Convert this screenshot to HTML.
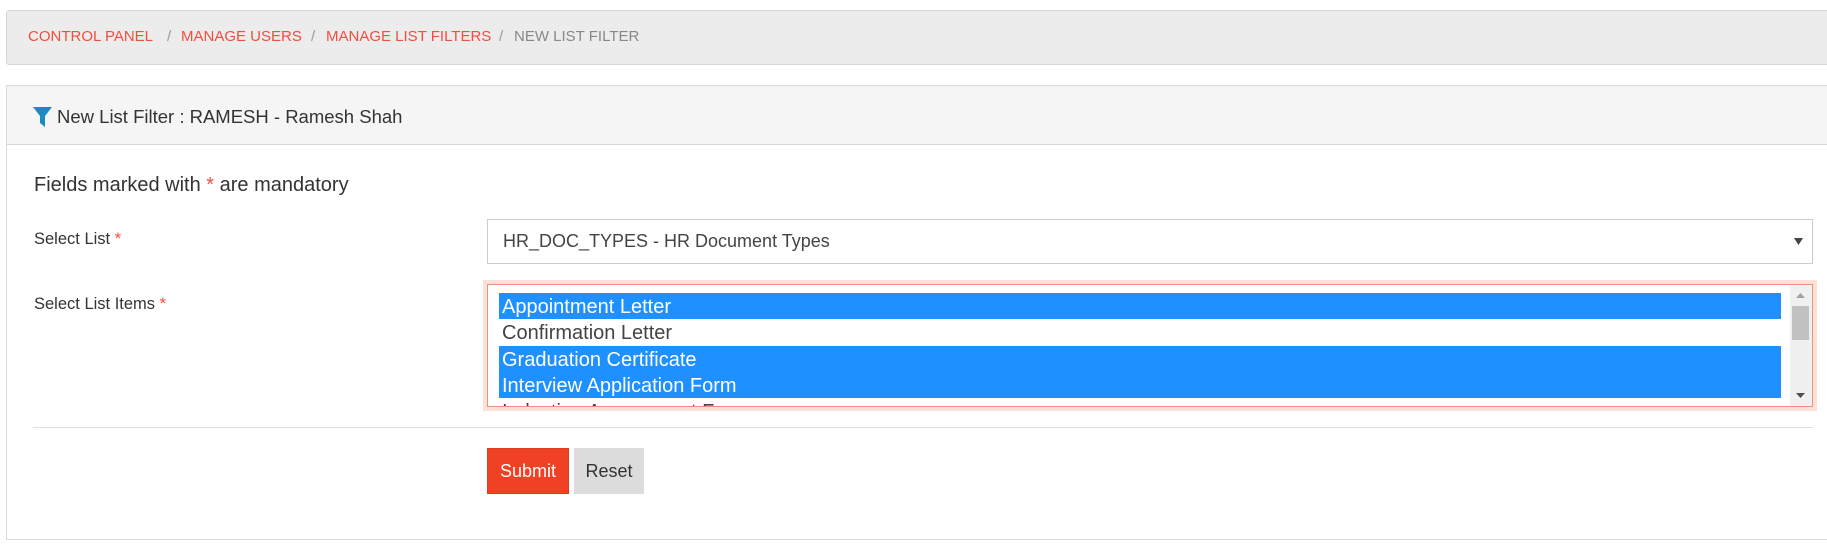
<!DOCTYPE html>
<html><head><style>
*{box-sizing:border-box;margin:0;padding:0}
body{width:1827px;height:545px;background:#fff;font-family:"Liberation Sans",sans-serif;position:relative;overflow:hidden;color:#333}
.abs{position:absolute}
.bc{left:6px;top:10px;width:1821px;height:55px;background:#ececec;border:1px solid #d6d6d6;border-right:none;border-radius:3px 0 0 3px}
.bc span{position:absolute;top:17px;font-size:15px;white-space:nowrap}
.red{color:#f04e3e}
.panel{left:6px;top:85px;width:1821px;height:455px;border:1px solid #dcdcdc;border-right:none}
.ph{left:7px;top:86px;width:1820px;height:59px;background:#f5f5f5;border-bottom:1px solid #d8d8d8}
.t{white-space:nowrap}
</style></head><body>
<div class="abs bc">
<span class="red" style="left:21px">CONTROL PANEL</span>
<span style="left:160px;color:#999">/</span>
<span class="red" style="left:174px">MANAGE USERS</span>
<span style="left:304px;color:#999">/</span>
<span class="red" style="left:319px">MANAGE LIST FILTERS</span>
<span style="left:492px;color:#999">/</span>
<span style="left:507px;color:#888">NEW LIST FILTER</span>
</div>
<div class="abs panel"></div>
<div class="abs ph"></div>
<svg class="abs" style="left:33px;top:107px" width="19" height="20" viewBox="0 0 19 20"><path d="M0 0H19L12 9V20L7 16V9Z" fill="#1a8ac3"/></svg>
<div class="abs t" style="left:57px;top:106px;font-size:18.5px;color:#333">New List Filter : RAMESH - Ramesh Shah</div>
<div class="abs t" style="left:34px;top:174px;font-size:20px">Fields marked with <span class="red">*</span> are mandatory</div>
<div class="abs t" style="left:34px;top:230px;font-size:16.5px">Select List <span class="red">*</span></div>
<div class="abs t" style="left:34px;top:295px;font-size:16.5px">Select List Items <span class="red">*</span></div>
<div class="abs" style="left:487px;top:219px;width:1326px;height:45px;border:1px solid #ccc;background:#fff"></div>
<div class="abs t" style="left:503px;top:231px;font-size:18px;color:#444">HR_DOC_TYPES - HR Document Types</div>
<svg class="abs" style="left:1794px;top:238px" width="9" height="7"><path d="M0 0H9L4.5 7Z" fill="#444"/></svg>
<div class="abs" style="left:483px;top:280px;width:1334px;height:131px;background:#fae2d8"></div>
<div class="abs" style="left:487px;top:284px;width:1326px;height:123px;border:1px solid #f2917a;background:#fff;overflow:hidden">
 <div class="abs" style="left:11px;top:8px;width:1282px;height:26px;background:#1e90ff"></div>
 <div class="abs" style="left:11px;top:61px;width:1282px;height:52px;background:#1e90ff"></div>
 <div class="abs t" style="left:14px;top:11px;font-size:20px;color:#fff">Appointment Letter</div>
 <div class="abs t" style="left:14px;top:37px;font-size:20px;color:#444">Confirmation Letter</div>
 <div class="abs t" style="left:14px;top:64px;font-size:20px;color:#fff">Graduation Certificate</div>
 <div class="abs t" style="left:14px;top:90px;font-size:20px;color:#fff">Interview Application Form</div>
 <div class="abs t" style="left:14px;top:116px;font-size:20px;color:#444">Induction Assessment Form</div>
 <div class="abs" style="left:1302px;top:0;width:22px;height:121px;background:#f0f0f0"></div>
 <div class="abs" style="left:1304px;top:21px;width:17px;height:34px;background:#c1c1c1"></div>
 <svg class="abs" style="left:1308px;top:8px" width="9" height="5"><path d="M0 5H9L4.5 0Z" fill="#a3a3a3"/></svg>
 <svg class="abs" style="left:1308px;top:108px" width="9" height="5"><path d="M0 0H9L4.5 5Z" fill="#505050"/></svg>
</div>
<div class="abs" style="left:33px;top:427px;width:1780px;height:1px;background:#e0e0e0"></div>
<div class="abs t" style="left:487px;top:448px;width:82px;height:46px;background:#f04124;border:1px solid #de3a1e;color:#fff;font-size:18px;text-align:center;line-height:44px">Submit</div>
<div class="abs t" style="left:574px;top:448px;width:70px;height:46px;background:#dcdcdc;color:#333;font-size:18px;text-align:center;line-height:46px">Reset</div>
</body></html>
